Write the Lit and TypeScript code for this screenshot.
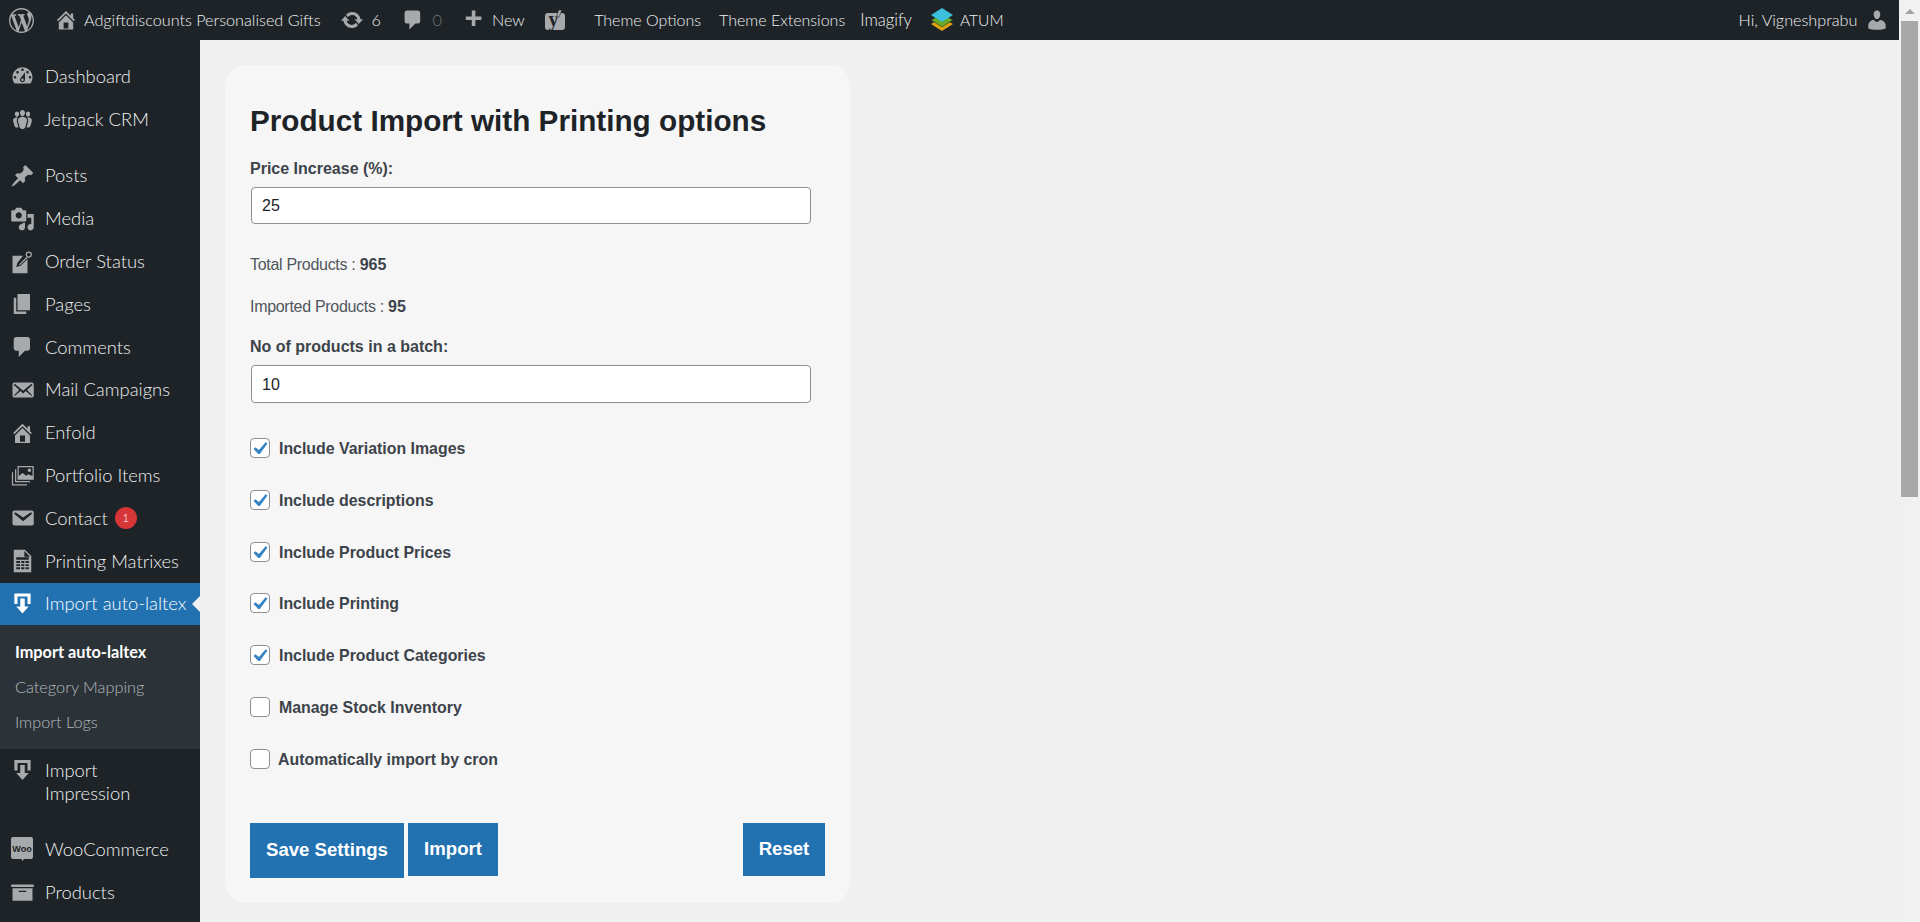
import { LitElement, html, css, svg } from "lit";
import { customElement } from "lit/decorators.js";

const P: Record<string, string> = {
  wp: "M20 10c0-5.51-4.49-10-10-10C4.48 0 0 4.49 0 10c0 5.52 4.48 10 10 10 5.51 0 10-4.48 10-10zM7.78 15.37L4.37 6.22c.55-.02 1.17-.08 1.17-.08.5-.06.44-1.13-.06-1.11 0 0-1.45.11-2.37.11-.18 0-.37 0-.58-.01C4.12 2.69 6.87 1.11 10 1.11c2.33 0 4.45.87 6.05 2.34-.68-.11-1.65.39-1.65 1.58 0 .74.45 1.36.9 2.1.35.61.55 1.36.55 2.46 0 1.49-1.4 5-1.4 5l-3.03-8.37c.54-.02.82-.17.82-.17.5-.05.44-1.25-.06-1.22 0 0-1.44.12-2.38.12-.87 0-2.33-.12-2.33-.12-.5-.03-.56 1.2-.06 1.22l.92.08 1.26 3.41zM17.41 10c.24-.64.74-1.87.43-4.25.7 1.29 1.05 2.71 1.05 4.25 0 3.29-1.73 6.24-4.4 7.78.97-2.59 1.94-5.2 2.92-7.78zM6.1 18.09C3.12 16.65 1.11 13.53 1.11 10c0-1.3.23-2.48.72-3.59C3.25 10.3 4.67 14.2 6.1 18.09zm4.03-6.63l2.58 6.98c-.86.29-1.76.45-2.71.45-.79 0-1.57-.11-2.29-.33.81-2.38 1.62-4.74 2.42-7.1z",
  home: "M16 8.5l1.53 1.53-1.06 1.06L10 4.62l-6.47 6.47-1.06-1.06L10 2.5l4 4v-2h2v4zm-6-2.46l6 5.99V18H4v-5.97zM12 17v-5H8v5h4z",
  update: "M10.2 3.28c3.53 0 6.43 2.61 6.92 6h2.08l-3.5 4-3.5-4h2.32c-.45-1.97-2.21-3.45-4.32-3.45-1.45 0-2.73.71-3.54 1.78L4.95 5.66C6.23 4.2 8.11 3.28 10.2 3.28zm-.4 13.44c-3.52 0-6.43-2.61-6.92-6H.8l3.5-4c1.17 1.33 2.33 2.67 3.5 4H5.48c.45 1.97 2.21 3.45 4.32 3.45 1.45 0 2.73-.71 3.54-1.78l1.71 1.95c-1.28 1.46-3.15 2.38-5.25 2.38z",
  comment: "M5 2h9c1.1 0 2 .9 2 2v7c0 1.1-.9 2-2 2h-2l-5 5v-5H5c-1.1 0-2-.9-2-2V4c0-1.1.9-2 2-2z",
  plus: "M17 7v3h-5v5H9v-5H4V7h5V2h3v5h5z",
  user: "M10 9.25c-2.27 0-2.73-3.44-2.73-3.44C7 4.02 7.82 2 9.97 2c2.16 0 2.98 2.02 2.71 3.81 0 0-.41 3.44-2.68 3.44zm0 2.57L12.72 10c2.39 0 4.52 2.33 4.52 4.53v2.49s-3.65 1.13-7.24 1.13c-3.65 0-7.24-1.13-7.24-1.13v-2.49c0-2.25 1.94-4.48 4.47-4.48z",
  dashboard: "M3.76 16h12.48c1.1-1.37 1.76-3.11 1.76-5 0-4.42-3.58-8-8-8s-8 3.58-8 8c0 1.89.66 3.63 1.76 5zM10 4c.55 0 1 .45 1 1s-.45 1-1 1-1-.45-1-1 .45-1 1-1zM6 6c.55 0 1 .45 1 1s-.45 1-1 1-1-.45-1-1 .45-1 1-1zm8 0c.55 0 1 .45 1 1s-.45 1-1 1-1-.45-1-1 .45-1 1-1zm-5.37 5.55L12 7v6c0 1.1-.9 2-2 2s-2-.9-2-2c0-.57.24-1.08.63-1.45zM4 10c.55 0 1 .45 1 1s-.45 1-1 1-1-.45-1-1 .45-1 1-1zm12 0c.55 0 1 .45 1 1s-.45 1-1 1-1-.45-1-1 .45-1 1-1zm-5 3c0-.55-.45-1-1-1s-1 .45-1 1 .45 1 1 1 1-.45 1-1z",
  groups: "M8.03 4.46c-.29 1.28.55 3.46 1.97 3.46 1.41 0 2.25-2.18 1.96-3.46-.22-.98-1.08-1.63-1.96-1.63-.89 0-1.74.65-1.97 1.63zm-4.13.9c-.25 1.08.47 2.93 1.67 2.93s1.92-1.85 1.67-2.93c-.19-.83-.92-1.39-1.67-1.39s-1.48.56-1.67 1.39zm8.86 0c-.25 1.08.47 2.93 1.66 2.93 1.2 0 1.92-1.85 1.67-2.93-.19-.83-.92-1.39-1.67-1.39-.74 0-1.47.56-1.66 1.39zm-.59 11.43l1.25-4.3C14.2 10 12.71 8.47 10 8.47c-2.72 0-4.21 1.53-3.44 4.02l1.26 4.3C8.05 17.51 9 18 10 18c.98 0 1.94-.49 2.17-1.21zm-6.1-7.63c-.49.67-.96 1.83-.42 3.59l1.12 3.79c-.34.2-.77.31-1.2.31-.85 0-1.65-.41-1.85-1.03l-1.07-3.65c-.65-2.11.61-3.4 2.92-3.4.27 0 .54.02.79.06-.1.1-.2.22-.29.33zm8.35-.39c2.31 0 3.58 1.29 2.92 3.4l-1.07 3.65c-.2.62-1 1.03-1.85 1.03-.43 0-.86-.11-1.2-.31l1.11-3.79c.55-1.76.08-2.92-.42-3.59-.09-.11-.19-.23-.29-.33.25-.04.52-.06.8-.06z",
  pin: "M10.44 3.02l1.82-1.82 6.36 6.35-1.83 1.82c-1.05-.68-2.48-.57-3.41.36l-.75.75c-.92.93-1.04 2.35-.35 3.41l-1.83 1.82-2.41-2.41-2.8 2.79c-.42.42-3.38 2.71-3.8 2.29s1.86-3.39 2.28-3.81l2.79-2.79L4.1 9.36l1.83-1.82c1.05.69 2.48.57 3.4-.36l.75-.75c.93-.92 1.05-2.35.36-3.41z",
  media: "M13 11V4c0-.55-.45-1-1-1h-1.67L9 1H5L3.67 3H2c-.55 0-1 .45-1 1v7c0 .55.45 1 1 1h10c.55 0 1-.45 1-1zM7 4.5c1.38 0 2.5 1.12 2.5 2.5S8.38 9.5 7 9.5 4.5 8.38 4.5 7 5.62 4.5 7 4.5zM14 6h5v10.5c0 1.38-1.12 2.5-2.5 2.5S14 17.88 14 16.5s1.12-2.5 2.5-2.5c.17 0 .34.02.5.05V9h-3V6zm-4 8.05V13h2v3.5c0 1.38-1.12 2.5-2.5 2.5S7 17.88 7 16.5 8.12 14 9.500 14c.17 0 .34.02.5.05z",
  order: "M2 5h8.500L6 10.500 5 14l3.500-1L14 7.500V19H2z M15 1.500a2.500 2.500 0 1 1 0 5 2.500 2.500 0 0 1 0-5zm0 1a1.500 1.500 0 1 0 0 3 1.500 1.500 0 0 0 0-3z M13.500 5.500l.8.8-6.500 6.200-.6-.6z",
  pages: "M6 15V2h10v13H6zm-1 1h8v2H3V5h2v11z",
  mail: "M19 14.5v-9c0-.83-.67-1.5-1.5-1.5H3.49c-.83 0-1.5.67-1.5 1.5v9c0 .83.67 1.5 1.5 1.5H17.5c.83 0 1.5-.67 1.5-1.5zm-1.31-9.11c.33.33.15.67-.03.84L13.6 9.95l3.9 4.06c.12.14.2.36.06.51-.13.16-.43.15-.56.05l-4.37-3.73-2.14 1.95-2.13-1.95-4.37 3.73c-.13.1-.43.11-.56-.05-.14-.15-.06-.37.06-.51l3.9-4.06-4.06-3.72c-.18-.17-.36-.51-.03-.84s.67-.17.95.07l6.24 5.04 6.25-5.04c.28-.24.62-.4.95-.07z",
  email: "M3.87 4h13.25C18.37 4 19 4.59 19 5.79v8.42c0 1.19-.63 1.79-1.88 1.79H3.87c-1.25 0-1.88-.6-1.88-1.79V5.79c0-1.2.63-1.79 1.88-1.79zm6.62 8.6l6.74-5.53c.24-.2.43-.66.13-1.07-.29-.41-.82-.42-1.17-.17l-5.7 3.86L4.8 5.83c-.35-.25-.88-.24-1.17.17-.3.41-.11.87.13 1.07z",
  portfolio: "M6 2h13v11H6zM7 3v7l3-2.500 3 2.200 1.500-1.200L18 10V3zM15.500 4a1.400 1.400 0 1 1 0 2.800 1.400 1.400 0 0 1 0-2.800zM4 4.500h1v9.500h11v1H4zM1.500 7h1v9.500h11v1h-12z",
  table: "M3 1h9l5 5v13H3zM11.500 2v4.500H16zM5 7v2h10V7zm0 3v1.500h3V10zm4 0v1.500h2.500V10zm3.500 0v1.500H15V10zM5 12.500V14h3v-1.500zm4 0V14h2.500v-1.500zm3.500 0V14H15v-1.500zM5 15v1.500h3V15zm4 0v1.500h2.500V15zm3.500 0v1.500H15V15z",
  importer: "M3.500 1.500h13V10H14V4H6v6H3.500zM8.200 5.500h3.600V12h3.200L10 17.500 5 12h3.200z",
  archive: "M19 4v2H1V4h18zM2 7h16v10H2V7zm11 3V9H7v1h6z",
};

const icon = (name: string, cls = "") =>
  html`<svg class="ic ${cls}" viewBox="0 0 20 20" aria-hidden="true"><path fill-rule="evenodd" d=${P[name]}></path></svg>`;

interface MenuItem {
  label: string;
  icon?: string;
  cls?: string;
  badge?: string;
}

const top: MenuItem[] = [
  { label: "Dashboard", icon: "dashboard" },
  { label: "Jetpack CRM", icon: "groups", cls: "j" },
];
const mid: MenuItem[] = [
  { label: "Posts", icon: "pin" },
  { label: "Media", icon: "media" },
  { label: "Order Status", icon: "order" },
  { label: "Pages", icon: "pages" },
  { label: "Comments", icon: "comment" },
  { label: "Mail Campaigns", icon: "mail" },
  { label: "Enfold", icon: "home" },
  { label: "Portfolio Items", icon: "portfolio" },
  { label: "Contact", icon: "email", badge: "1" },
  { label: "Printing Matrixes", icon: "table" },
];
const checks: [string, boolean, string][] = [
  ["Include Variation Images", true, ""],
  ["Include descriptions", true, ""],
  ["Include Product Prices", true, ""],
  ["Include Printing", true, ""],
  ["Include Product Categories", true, ""],
  ["Manage Stock Inventory", false, ""],
  ["Automatically import by cron", false, "tight"],
];

@customElement("app-root")
export class AppRoot extends LitElement {
  static styles = css`
    :host { display: block; width: 1920px; height: 922px; overflow: hidden; background: #f0f0f0; }
    * { box-sizing: border-box; }
    .page { display: grid; grid-template-columns: 1fr 21px; height: 922px; }
    .left { display: flex; flex-direction: column; min-width: 0; height: 922px; overflow: hidden; }

    .scroll { background: #f1f1f1; padding: 9px 2px 0; display: flex; flex-direction: column; align-items: center; }
    .arrow { width: 0; height: 0; border-left: 5px solid transparent; border-right: 5px solid transparent; border-bottom: 5px solid #a3a3a3; }
    .thumb { width: 17px; height: 476px; background: #a8a8a8; margin-top: 7px; }

    .bar { height: 40px; background: #1d2327; display: flex; align-items: center; color: #f0f0f1;
      font: 300 16.2px/20px Lato, sans-serif; flex: none; white-space: nowrap; }
    .bar .ic { fill: #a7aaad; display: block; flex: none; }
    .bar .wp { width: 25px; height: 25px; margin-left: 9px; }
    .bar .home { width: 24px; height: 24px; margin-left: 20px; }
    .bar .site { margin-left: 6px; }
    .bar .upd { width: 24px; height: 24px; margin-left: 19px; }
    .bar .n6 { margin-left: 8px; }
    .bar .cm { width: 24px; height: 24px; margin-left: 19.6px; }
    .bar .n0 { margin-left: 8px; color: #6f7479; }
    .bar .pl { width: 24px; height: 24px; margin-left: 19px; }
    .bar .new { margin-left: 7px; }
    .yoast { width: 22px; height: 26px; margin-left: 19.5px; display: block; flex: none; }
    .bar .t1 { margin-left: 28px; font-size: 16px; }
    .bar .t2 { margin-left: 18px; font-size: 16px; }
    .bar .t3 { margin-left: 15px; font-size: 16.6px; }
    .atum { width: 24px; height: 26px; margin-left: 18px; display: block; flex: none; }
    .bar .t4 { margin-left: 6px; font-size: 15.6px; }
    .bar .hi { margin-left: auto; }
    .bar .usr { width: 24px; height: 24px; margin: 0 9.6px 0 8px; }

    .body { display: flex; flex: 1; min-height: 0; }
    .side { width: 200px; flex: none; background: #1d2327; padding-top: 15px; color: #f0f0f1;
      font: 300 18.4px/22px Lato, sans-serif; }
    .row { height: 42.8px; display: flex; align-items: center; padding: 0 0 1px 45px; position: relative; white-space: nowrap; }
    .row .ic { position: absolute; left: 10px; top: 50%; transform: translateY(-50%); width: 25px; height: 25px; fill: #a7aaad; }
    .row.j { padding-bottom: 0; }
    .row.j span.lb { margin-left: -1px; }
    .sep { height: 14px; }
    .badge { width: 22px; height: 22px; border-radius: 50%; background: #d63638; color: #fff; margin-left: 7px;
      font: 300 12px/22px Lato, sans-serif; text-align: center; }
    .row.cur { background: #2271b1; color: #fff; }
    .row.cur .ic { fill: #fff; }
    .row.cur::after { content: ""; position: absolute; right: 0; top: 50%; margin-top: -8px; border: 8px solid transparent; border-right-color: #f0f0f0; border-left-width: 0; }
    .sub { background: #2c3338; height: 124px; padding: 8.5px 0 0 15px; font-size: 16.3px; line-height: 35px; color: #b4b9be; }
    .sub div.on { color: #fff; font-weight: 700; }
    .row.two { height: 78.6px; align-items: flex-start; padding-top: 10px; white-space: normal; line-height: 23px; }
    .row.two .ic { top: 9px; transform: none; }
    .woo { position: absolute; left: 10px; top: 50%; transform: translateY(-50%); width: 24px; height: 26px; display: block; }

    .main { flex: 1; padding: 25px; min-width: 0; }
    .card { width: 625px; height: 838px; background: #f6f6f6; border-radius: 20px; padding: 25px; font-family: "Liberation Sans", Arial, sans-serif; color: #3c434a; }
    h1 { margin: 14px 0 0; font-size: 29.7px; line-height: 34px; font-weight: 700; color: #1d2327; }
    .lbl { font-size: 16px; line-height: 20px; font-weight: 700; }
    .l1 { margin-top: 21px; }
    .l2 { margin-top: 20px; }
    input { display: block; width: 560px; margin: 8px 0 0 1px; border: 1px solid #8c8f94; border-radius: 4px; background: #fff;
      padding: 0 10px; font: 16px "Liberation Sans", Arial, sans-serif; color: #1d2327; outline: none; }
    .i1 { height: 37px; }
    .i2 { height: 38px; padding-top: 1px; }
    .st { font-size: 16px; line-height: 20px; letter-spacing: -0.3px; color: #50575e; padding-top: 1px; }
    .st b { letter-spacing: 0; color: #3c434a; }
    .s1 { margin-top: 30px; }
    .s2 { margin-top: 21px; }
    .checks { margin-top: 35px; display: flex; flex-direction: column; gap: 31.8px; }
    .ck { display: flex; align-items: center; height: 20px; font-size: 15.9px; font-weight: 700; gap: 9px; }
    .ck.tight { gap: 8px; }
    .ck .tx { padding-top: 2px; }
    .box { width: 20px; height: 20px; flex: none; border: 1px solid #8c8f94; border-radius: 4px; background: #fff; display: block; }
    .box svg { display: block; width: 18px; height: 18px; fill: #3582c4; }
    .btns { display: flex; align-items: flex-start; margin-top: 54px; }
    .btn { background: #2271b1; color: #fff; border: 0; font: 700 18.6px "Liberation Sans", Arial, sans-serif; height: 53px; padding: 0; }
    .save { width: 154px; height: 55px; }
    .imp { width: 90px; margin-left: 4px; }
    .rst { width: 82px; margin-left: auto; }
  `;

  private row(m: MenuItem) {
    return html`<div class="row ${m.cls ?? ""}">
      ${m.icon ? icon(m.icon) : ""}<span class="lb">${m.label}</span>
      ${m.badge ? html`<span class="badge">${m.badge}</span>` : ""}
    </div>`;
  }

  render() {
    return html`<div class="page">
      <div class="left">
        <div class="bar">
          ${icon("wp", "wp")}${icon("home", "home")}<span class="site">Adgiftdiscounts Personalised Gifts</span>
          ${icon("update", "upd")}<span class="n6">6</span>
          ${icon("comment", "cm")}<span class="n0">0</span>
          ${icon("plus", "pl")}<span class="new">New</span>
          <svg class="yoast" viewBox="0 0 22 26" aria-hidden="true">
            <path d="M4 6h14a3 3 0 0 1 3 3v11a3 3 0 0 1-3 3H4a3 3 0 0 1-3-3V9a3 3 0 0 1 3-3z" fill="#a7aaad"></path>
            <text x="4.500" y="19" font-family="Liberation Serif, serif" font-weight="700" font-size="20" fill="#1d2327">y</text>
            <path d="M14.500 3h3.500L15 10h-2.500z" fill="#a7aaad" stroke="#1d2327" stroke-width=".6"></path>
          </svg>
          <span class="t1">Theme Options</span><span class="t2">Theme Extensions</span><span class="t3">Imagify</span>
          <svg class="atum" viewBox="0 0 24 26" aria-hidden="true">
            <path d="M12 11l11 6-11 7-11-7z" fill="#e0a30f"></path>
            <path d="M12 7l11 6-11 7-11-7z" fill="#6aa82a" stroke="#1d2327" stroke-width=".5"></path>
            <path d="M12 1l11 7-11 7-11-7z" fill="#3cbfdc"></path>
          </svg>
          <span class="t4">ATUM</span>
          <span class="hi">Hi, Vigneshprabu</span>${icon("user", "usr")}
        </div>
        <div class="body">
          <nav class="side">
            ${top.map((m) => this.row(m))}
            <div class="sep"></div>
            ${mid.map((m) => this.row(m))}
            <div class="row cur">${icon("importer")}<span class="lb">Import auto-laltex</span></div>
            <div class="sub">
              <div class="on">Import auto-laltex</div>
              <div>Category Mapping</div>
              <div>Import Logs</div>
            </div>
            <div class="row two">${icon("importer")}<span class="lb">Import<br />Impression</span></div>
            <div class="row">
              <svg class="woo" viewBox="0 0 24 26" aria-hidden="true">
                <path d="M3 1h18a2 2 0 0 1 2 2v18a2 2 0 0 1-2 2h-7l-1.500 2-1-2H3a2 2 0 0 1-2-2V3a2 2 0 0 1 2-2z" fill="#a7aaad"></path>
                <text x="12" y="16" text-anchor="middle" font-family="Liberation Sans, sans-serif" font-weight="700" font-size="9" fill="#1d2327">Woo</text>
              </svg>
              <span class="lb">WooCommerce</span>
            </div>
            ${this.row({ label: "Products", icon: "archive" })}
          </nav>
          <main class="main">
            <section class="card">
              <h1>Product Import with Printing options</h1>
              <div class="lbl l1">Price Increase (%):</div>
              <input class="i1" value="25" />
              <div class="st s1">Total Products : <b>965</b></div>
              <div class="st s2">Imported Products : <b>95</b></div>
              <div class="lbl l2">No of products in a batch:</div>
              <input class="i2" value="10" />
              <div class="checks">
                ${checks.map(
                  ([t, on, c]) => html`<div class="ck ${c}">
                    <span class="box">${on
                      ? html`<svg viewBox="0 0 18 18">${svg`<path d="M14.600 3.200l1.900 1.300-7.700 10.600H7.300L2.600 10l1.700-1.700 3.700 2.800z"></path>`}</svg>`
                      : ""}</span>
                    <span class="tx">${t}</span>
                  </div>`
                )}
              </div>
              <div class="btns">
                <button class="btn save">Save Settings</button>
                <button class="btn imp">Import</button>
                <button class="btn rst">Reset</button>
              </div>
            </section>
          </main>
        </div>
      </div>
      <div class="scroll"><div class="arrow"></div><div class="thumb"></div></div>
    </div>`;
  }
}
